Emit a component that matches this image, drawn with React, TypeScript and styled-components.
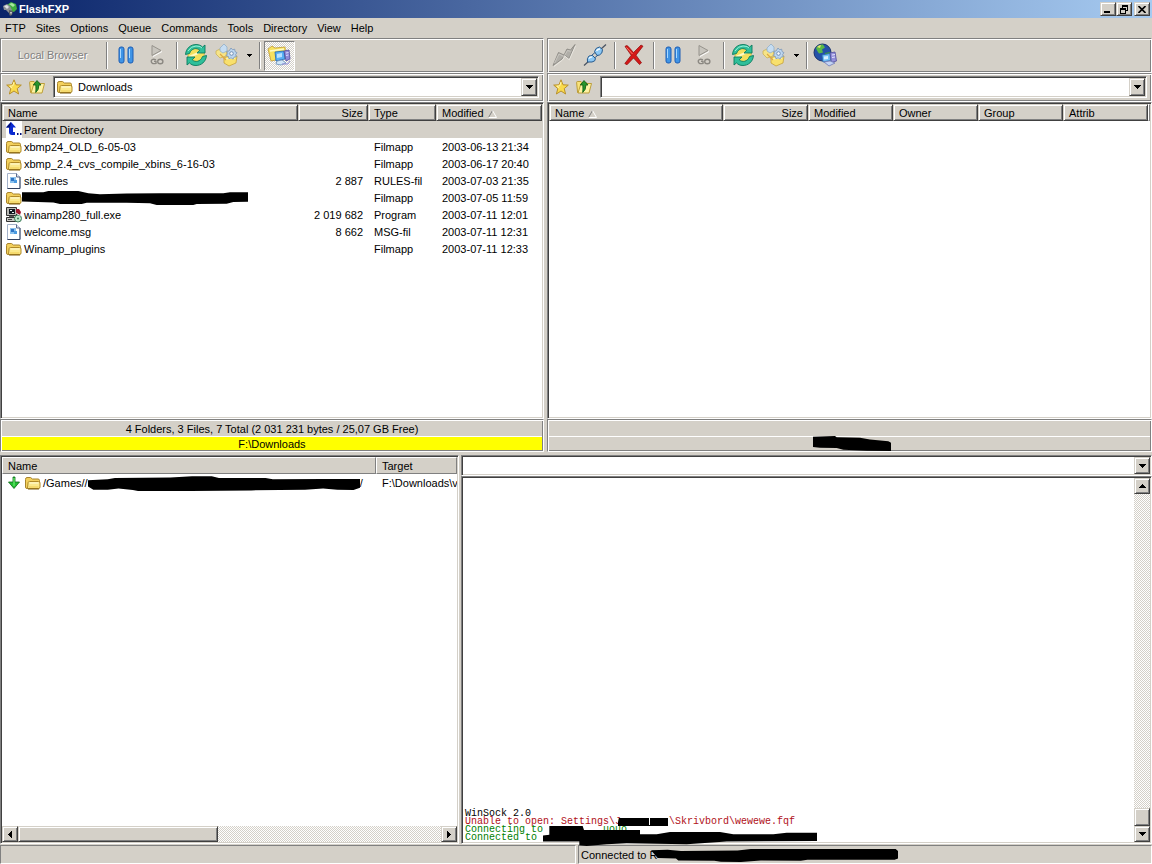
import React from "react";
import styled, { createGlobalStyle, css } from "styled-components";

const face = "#d4d0c8";
const shade = "#808080";
const dark = "#404040";
const uiFont = '"Liberation Sans", Arial, sans-serif';

const GlobalStyle = createGlobalStyle`
  * { box-sizing: border-box; }
  html, body { margin: 0; padding: 0; }
  body { background: ${face}; color: #000; font: 11px/13px ${uiFont}; }
  button, input, select { font: inherit; color: inherit; margin: 0; border-radius: 0; }
  svg { display: block; flex: none; }
`;

const sunken = css`
  border: 1px solid;
  border-color: ${shade} #fff #fff ${shade};
  box-shadow: inset 1px 1px ${dark}, inset -1px -1px ${face};
  padding: 1px;
`;

const raised = css`
  border: 1px solid;
  border-color: ${face} ${dark} ${dark} ${face};
  box-shadow: inset 1px 1px #fff, inset -1px -1px ${shade};
  background: ${face};
`;

const etched = css`
  border: 1px solid;
  border-color: ${shade} #fff #fff ${shade};
  box-shadow: inset 1px 1px #fff, inset -1px -1px ${shade};
`;

const checker = css`
  background: repeating-conic-gradient(#fff 0 25%, ${face} 0 50%) 0 0 / 2px 2px;
`;

const Window = styled.div`
  display: flex;
  flex-direction: column;
  min-height: 100vh;
`;

const TitleBar = styled.header`
  display: flex;
  align-items: center;
  height: 18px;
  padding: 0 2px 0 3px;
  background: linear-gradient(90deg, #0a246a, #a6caf0);
`;

const Title = styled.h1`
  flex: 1;
  margin: 0 0 0 2px;
  color: #fff;
  font-size: 11px;
  font-weight: bold;
`;

const CaptionButton = styled.button<{ $apart?: boolean }>`
  ${raised}
  display: flex;
  align-items: center;
  justify-content: center;
  width: 16px;
  height: 14px;
  padding: 0;
  margin-left: ${(p) => (p.$apart ? 2 : 0)}px;
`;

const MenuBar = styled.nav`
  display: flex;
  height: 20px;
`;

const MenuItem = styled.button`
  border: 0;
  padding: 0 5px;
  background: none;
`;

const TopPanes = styled.div`
  flex: 414 0 0;
  display: grid;
  grid-template-columns: minmax(0, 544fr) minmax(0, 605fr);
  column-gap: 3px;
  margin-bottom: 3px;
`;

const BottomPanes = styled.div`
  flex: 389 0 0;
  display: grid;
  grid-template-columns: minmax(0, 459fr) minmax(0, 691fr);
  column-gap: 2px;
  margin-bottom: 1px;
`;

const Pane = styled.section`
  display: flex;
  flex-direction: column;
`;

const Toolbar = styled.div`
  ${etched}
  display: flex;
  align-items: center;
  height: 35px;
  padding: 0 1px;
`;

const ToolLabel = styled.span`
  width: 101px;
  text-align: center;
  color: ${shade};
  text-shadow: 1px 1px #fff;
`;

const Tool = styled.button<{ $pressed?: boolean }>`
  display: flex;
  align-items: center;
  justify-content: center;
  width: 31px;
  height: 30px;
  padding: 0 2px 2px 0;
  border: 1px solid transparent;
  background: none;
  ${(p) =>
    p.$pressed &&
    css`
      ${checker}
      border-color: ${shade} #fff #fff ${shade};
    `}
`;

const ToolArrow = styled(Tool)`
  width: 13px;
  padding: 0;
`;

const Divider = styled.i`
  width: 2px;
  height: 27px;
  margin: 0 3px;
  border-left: 1px solid ${shade};
  border-right: 1px solid #fff;
`;

const AddressBar = styled.div`
  ${etched}
  display: flex;
  align-items: center;
  height: 29px;
  padding: 0 4px 1px 5px;
`;

const IconButton = styled.button`
  width: 16px;
  height: 16px;
  margin-right: 7px;
  padding: 0;
  border: 0;
  background: none;
`;

const Combo = styled.div<{ $height: number }>`
  ${sunken}
  position: relative;
  flex: 1 0 auto;
  display: flex;
  height: ${(p) => p.$height}px;
  background: #fff;
`;

const AddressCombo = styled(Combo)`
  margin-left: 1px;
`;

const QueryCombo = styled(Combo)`
  flex: none;
`;

const ComboIcon = styled.span`
  position: absolute;
  left: 3px;
  top: 2px;
  pointer-events: none;
`;

const Select = styled.select`
  appearance: none;
  flex: 1;
  width: 100%;
  border: 0;
  padding: 0 18px 0 23px;
  background: transparent;
  outline: 0;
`;

const ComboArrow = styled.span`
  ${raised}
  position: absolute;
  top: 1px;
  right: 1px;
  bottom: 1px;
  width: 16px;
  display: flex;
  align-items: center;
  justify-content: center;
  pointer-events: none;
`;

const ListBox = styled.div`
  ${sunken}
  flex: 1;
  display: flex;
  flex-direction: column;
  overflow: hidden;
  background: #fff;
`;

const ListBody = styled.div`
  flex: 1;
  overflow: hidden;
`;

const Table = styled.table`
  width: 100%;
  table-layout: fixed;
  border-collapse: separate;
  border-spacing: 0;
`;

const HeadCell = styled.th<{ $right?: boolean; $flat?: boolean; $width?: number }>`
  ${raised}
  ${(p) =>
    p.$flat &&
    css`
      border-color: #fff ${shade} ${shade} #fff;
      box-shadow: none;
    `}
  width: ${(p) => (p.$width ? `${p.$width}px` : "auto")};
  height: 17px;
  padding: 2px 4px 0 5px;
  font-weight: normal;
  line-height: 13px;
  text-align: ${(p) => (p.$right ? "right" : "left")};
  white-space: nowrap;
  overflow: hidden;
`;

const FillerCell = styled(HeadCell)`
  padding: 0;
`;

const HeadLabel = styled.span`
  display: flex;
  align-items: center;
  gap: 4px;
`;

const Row = styled.tr<{ $selected?: boolean }>`
  background: ${(p) => (p.$selected ? face : "#fff")};
`;

const Cell = styled.td<{ $right?: boolean }>`
  height: 17px;
  padding: 2px 5px 0 6px;
  line-height: 15px;
  text-align: ${(p) => (p.$right ? "right" : "left")};
  white-space: nowrap;
  overflow: hidden;
`;

const NameCell = styled(Cell)`
  padding: 0 0 0 4px;
`;

const Entry = styled.span`
  display: flex;
  align-items: center;
  gap: 2px;
  height: 17px;
`;

const EntryName = styled.span`
  display: flex;
  align-items: center;
  height: 17px;
  padding-top: 2px;
`;

const QueueIcons = styled.span`
  display: flex;
  gap: 3px;
`;

const Summary = styled.footer`
  ${etched}
  height: 33px;
  padding: 1px;
  text-align: center;
`;

const Totals = styled.div`
  height: 15px;
  line-height: 16px;
`;

const PathLine = styled.div<{ $color?: string }>`
  display: flex;
  justify-content: center;
  height: 14px;
  line-height: 14px;
  border-top: 1px solid #fff;
  background: ${(p) => p.$color || "transparent"};
`;

const ScrollBar = styled.div<{ $vertical?: boolean }>`
  ${checker}
  display: flex;
  flex: none;
  flex-direction: ${(p) => (p.$vertical ? "column" : "row")};
  ${(p) => (p.$vertical ? "width: 16px;" : "height: 16px;")}
`;

const ScrollButton = styled.button`
  ${raised}
  display: flex;
  align-items: center;
  justify-content: center;
  width: 16px;
  height: 16px;
  padding: 0;
`;

const Thumb = styled.div<{ $grow: number }>`
  ${raised}
  flex: ${(p) => p.$grow} 0 0;
`;

const Track = styled.div<{ $grow: number }>`
  flex: ${(p) => p.$grow} 0 0;
`;

const QueryInput = styled.input`
  flex: 1;
  border: 0;
  padding: 0 20px 0 3px;
  background: transparent;
  outline: 0;
`;

const LogBox = styled.div`
  ${sunken}
  flex: 1;
  display: flex;
  background: #fff;
`;

const LogLines = styled.div`
  position: relative;
  flex: 1;
  display: flex;
  flex-direction: column;
  justify-content: flex-end;
  padding-left: 2px;
  font: 10px/8px "Liberation Mono", "Courier New", monospace;
`;

const LogLine = styled.div<{ $color?: string }>`
  height: 8px;
  white-space: pre;
  color: ${(p) => p.$color || "#000"};
`;

const LogMark = styled.span<{ $left: number; $bottom: number }>`
  position: absolute;
  left: ${(p) => p.$left}px;
  bottom: ${(p) => p.$bottom}px;
  z-index: 1;
`;

const StatusBar = styled.footer`
  display: grid;
  grid-template-columns: minmax(0, 576fr) minmax(0, 574fr);
  column-gap: 2px;
  height: 19px;
`;

const StatusCell = styled.div`
  display: flex;
  align-items: center;
  padding: 1px 2px 0;
  white-space: pre;
  border: 1px solid;
  border-color: ${shade} #fff #fff ${shade};
`;

/* ---------- drawings ---------- */

const Triangle = ({ dir }: { dir: "up" | "down" | "left" | "right" }) => {
  const d = {
    down: "M0 0h7v1h-1v1h-1v1h-1v1h-1v-1h-1v-1h-1v-1h-1z",
    up: "M0 4h7v-1h-1v-1h-1v-1h-1v-1h-1v1h-1v1h-1v1h-1z",
    left: "M4 0v7h-1v-1h-1v-1h-1v-1h-1v-1h1v-1h1v-1h1v-1z",
    right: "M0 0v7h1v-1h1v-1h1v-1h1v-1h-1v-1h-1v-1h-1v-1z",
  }[dir];
  const tall = dir === "left" || dir === "right";
  return (
    <svg width={tall ? 4 : 7} height={tall ? 7 : 4} shapeRendering="crispEdges">
      <path d={d} />
    </svg>
  );
};

const SortMark = () => (
  <svg width="9" height="8">
    <path d="M4.5 .5L.5 7.5" stroke="#808080" fill="none" />
    <path d="M4.5 .5L8.5 7.5H.5" stroke="#fff" fill="none" />
  </svg>
);

const AppIcon = () => (
  <svg width="14" height="16" viewBox="0 0 14 16">
    <path d="M4 4l4-3 5 2 1 5-3 3-5-1z" fill="#3fae3f" />
    <path d="M6 3l3-1 3 2-2 2z" fill="#a8e8a0" />
    <path d="M0 5l4-2 3 2 2 4-3 3-3-3H1z" fill="#8c9094" />
    <path d="M1 5l3-1 2 2-2 2z" fill="#dfe2e4" />
    <path d="M6 9l4 1-1 4-2 1-1-2z" fill="#5a5f62" />
    <path d="M7 11l2 0-1 3z" fill="#cfd2d4" />
  </svg>
);

const Folder = () => (
  <svg width="16" height="16" viewBox="0 0 16 16">
    <path d="M.5 4.500q0-2 1.500-2h3.500l2 1.500h5.500q1.500 0 1.500 1.500v6.500q0 1.500-1.500 1.500h-11q-1.500 0-1.500-1.500z" fill="#f3d05c" stroke="#a8842c" />
    <path d="M2.500 13l.6-5.500q.2-1 1.400-1h9q1.500 0 1.500 1.500v4q0 1.500-1.500 1.500h-10z" fill="#fbe98c" stroke="#b08a28" />
    <path d="M4.500 8h9" stroke="#fffbdc" />
    <path d="M4 12h9.500" stroke="#f0cc50" />
    <path d="M3 14h11" stroke="#7c5c10" />
  </svg>
);

const ParentIcon = () => (
  <svg width="16" height="17" viewBox="0 0 16 17">
    <path d="M0 0h16v17H0z" fill="#fff" />
    <path d="M5 1L0 6.500h3V11q0 3 3 3h3v-3H7V6.500h3z" fill="#0a2ad0" />
    <path d="M5 1L0 6.500h3V8l2-5z" fill="#02107a" />
    <path d="M11 12h1.500v2H11zM14 12h1.500v2H14z" fill="#02107a" />
  </svg>
);

const FileIcon = () => (
  <svg width="16" height="16" viewBox="0 0 16 16">
    <path d="M1.500.5h9l3.500 3.500v11.500H1.500z" fill="#fff" stroke="#a4b2ca" />
    <path d="M14 4v11.500H1.500" fill="none" stroke="#33415f" />
    <path d="M10.500.5v3.500H14" fill="#dbe3f2" stroke="#5b6b8c" />
    <path d="M4 4h6v6H4z" fill="#8cc2ee" />
    <path d="M5 5h3v3H5z" fill="#2f74c4" />
    <path d="M8 7h3v3H8z" fill="#4b9be0" />
  </svg>
);

const ProgramIcon = () => (
  <svg width="16" height="16" viewBox="0 0 16 16">
    <path d="M.5.5h10v8H.5z" fill="#b8b8b4" stroke="#333" />
    <path d="M3 2h6v5H3z" fill="#101820" />
    <path d="M4 3h2v1H4zM6 5h2v1H6z" fill="#e8f4f4" />
    <path d="M3 9h5v1H3z" fill="#555" />
    <path d="M.5 10.500h10v4H.5z" fill="#c8c8c4" stroke="#333" />
    <path d="M2 12h4v1H2z" fill="#444" />
    <path d="M10 2l3 0 2 3-1 3-4-1z" fill="#a01830" />
    <circle cx="12" cy="11.500" r="3.500" fill="#bfe8cc" stroke="#3b7a58" />
    <circle cx="12" cy="11.500" r="1" fill="#3b7a58" />
    <path d="M10 6l5 3" stroke="#ddd" />
  </svg>
);

const DownArrow = () => (
  <svg width="16" height="16" viewBox="0 0 16 16">
    <path d="M7 2h2v5h4.500L8 13.500 2.500 7H7z" fill="#22c032" stroke="#0b6a16" strokeWidth=".8" />
    <path d="M8 3v8" stroke="#7cf07c" />
  </svg>
);

const Star = () => (
  <svg width="16" height="16" viewBox="0 0 16 16">
    <path d="M8 .8l2 5 5.300.3-4.100 3.500 1.400 5.400L8 12l-4.600 3 1.400-5.400L.7 6.100 6 5.800z" fill="#fadb4c" stroke="#b8902c" strokeLinejoin="round" />
    <path d="M8 3l-1.200 3.800-3 .4 2.400 2" fill="none" stroke="#fff6b0" />
  </svg>
);

const UpFolder = () => (
  <svg width="16" height="16" viewBox="0 0 16 16">
    <path d="M.6 3.500q0-1 1-1H5l1.500 1.500h4.500v9.500H1.600z" fill="#f7e27a" stroke="#b8962c" strokeWidth=".9" />
    <path d="M2 14L5 4.500h10.500L13 14z" fill="#fdf3a4" stroke="#b8962c" strokeWidth=".9" />
    <path d="M8 1.500l4 4.500H9.900q.2 5-3.200 7.500 .4-3 .1-7.500H4.300z" fill="#27952c" stroke="#0d5a14" strokeWidth=".8" />
  </svg>
);

const PauseIcon = () => (
  <svg width="18" height="18" viewBox="0 0 18 18">
    <rect x="2" y="1" width="5" height="16" rx="2" fill="#3f94e6" stroke="#1d5db4" />
    <rect x="11" y="1" width="5" height="16" rx="2" fill="#3f94e6" stroke="#1d5db4" />
    <path d="M3.500 3v9M12.500 3v9" stroke="#a8d8ff" />
  </svg>
);

const GoIcon = () => (
  <svg width="18" height="22" viewBox="0 0 18 22">
    <path d="M4 1.500v10l9-5z" fill="#c8c5be" stroke="#96938c" />
    <path d="M5 12.500l9-5" stroke="#fff" />
    <g fill="none" stroke="#8b8882" strokeWidth="1.400">
      <path d="M8 15.800q-4-1.500-4.800 1.200 0 3.500 4.800 2.400v-2H6" />
      <ellipse cx="12.300" cy="17.500" rx="2.600" ry="2.200" />
    </g>
  </svg>
);

const RefreshIcon = () => (
  <svg width="24" height="24" viewBox="0 0 24 24">
    <path d="M4 8l6-3 11 3-2 9-7 3-8-4z" fill="#f4e05c" stroke="#c8a838" strokeWidth=".6" />
    <path d="M5 14l14-6" stroke="#fffac0" strokeWidth="2" />
    <path d="M1.500 11.500C2 5 7 1.500 12 1.500c3 0 5 1 6.500 2.600L21 2v8h-8l2.700-2.800C13 4.500 7.500 5 5.500 10.500z" fill="#2fbf9a" stroke="#0b7a5e" strokeWidth=".9" />
    <path d="M22.500 12.500C22 19 17 22.500 12 22.500c-3 0-5-1-6.500-2.600L3 22v-8h8l-2.700 2.800c2.700 2.700 8.200 2.200 10.200-3.300z" fill="#2fbf9a" stroke="#0b7a5e" strokeWidth=".9" />
    <path d="M4 8q3-5 8-5t6 2" fill="none" stroke="#9cf0d8" />
  </svg>
);

const TransferIcon = () => (
  <svg width="24" height="24" viewBox="0 0 24 24">
    <path d="M1 8l4-2 2 1 5 0-1 6-6 2-4-4z" fill="#f6e488" stroke="#c9ac4a" strokeWidth=".7" />
    <path d="M9 15l4-2 2 1 7-1-1 7-7 3-5-3z" fill="#f8e06c" stroke="#c09a30" strokeWidth=".7" />
    <path d="M11 16l9-1" stroke="#fffbd0" />
    <path d="M5 5l4-4 3 3 0 4-4 2-3-2z" fill="#c6ddf2" stroke="#93aec8" strokeWidth=".8" />
    <path d="M16 5l1.500 1.700 2.200-.5.300 2.300 2 1.200-1.400 1.800.8 2.200-2.300.4-1 2-2-1.200-2.200.8-.5-2.200-2-1 1.300-1.900-.9-2.100 2.200-.5z" fill="#bcd6f0" stroke="#7b97b8" strokeWidth=".8" />
    <circle cx="16.500" cy="10.500" r="1.800" fill="#f5f8fc" stroke="#5f7fa6" strokeWidth=".8" />
    <path d="M5 11l6 6" stroke="#e0a840" strokeWidth="1.300" />
  </svg>
);

const BrowserIcon = () => (
  <svg width="24" height="24" viewBox="0 0 24 24">
    <path d="M1 6l4-3 3 2 10-1 1 11-15 3z" fill="#f7e15e" stroke="#c09a30" strokeWidth=".8" />
    <path d="M3 8l14-2" stroke="#fffbc0" strokeWidth="1.500" />
    <path d="M8 9l9-1 1 8-9 2z" fill="#58b0f4" stroke="#1c66b8" strokeWidth=".8" />
    <path d="M10 11l5-1 0 4-5 1z" fill="#b8e2ff" />
    <path d="M17 8l5-1 1 9-4 2z" fill="#8f8ad8" stroke="#4d4a9c" strokeWidth=".8" />
    <path d="M19 10l2.500-.5M19 12.500l2.500-.5" stroke="#dcdcff" />
    <path d="M10 18l5-1 4 3-5 2-5-1z" fill="#cfe6f8" stroke="#6a8db8" strokeWidth=".8" />
    <path d="M15 21h6l2-3" fill="none" stroke="#8f8ad8" />
  </svg>
);

const BoltIcon = () => (
  <svg width="24" height="24" viewBox="0 0 24 24">
    <path d="M1 22.500L6.500 9.500 12 12l3-6 3.500 1L23 1.500 17 15.500l-4.500-3.500L10 16z" fill="#b0aea8" stroke="#8b8983" strokeWidth=".9" />
    <path d="M2 23.500l8.500-6.500L13 13.200l4.300 3.500L23.500 3" fill="none" stroke="#f4f2ec" strokeWidth=".7" />
    <path d="M2.500 20l4.500-9 5 2.500 3.500-6 3 .8" fill="none" stroke="#d0cec8" strokeWidth=".8" />
  </svg>
);

const PlugIcon = () => (
  <svg width="24" height="24" viewBox="0 0 24 24">
    <path d="M1 22.500l5-4.500M18 6l5-4.500" stroke="#4c5664" strokeWidth="1.300" />
    <path d="M4.500 19q-1-3.500 1.500-6l3.500-.5 3 3q0 3-3.500 3.500z" fill="#8cc8f4" stroke="#27598c" />
    <path d="M11.500 8.500q1-4 5-4.500l3 2.500q.2 4-3 5.500l-2.500.5z" fill="#8cc8f4" stroke="#27598c" />
    <path d="M8.500 12.500l3.500-3M11.500 15l3.500-3" stroke="#27598c" />
    <path d="M6 15.500q1-1.800 3-1.500M13.500 8q1-2 3.500-2" stroke="#f0faff" fill="none" strokeWidth="1.500" />
  </svg>
);

const CrossIcon = () => (
  <svg width="22" height="22" viewBox="0 0 22 22">
    <path d="M2 2.500Q3.500.8 5 2.200L10.500 8.500 18 1l2 1.200L13 11.200l5.500 7.600-2 1.700-6-6.500L4 20.800 1.800 19.500 8.200 11.300z" fill="#d41818" stroke="#8e0c0c" strokeWidth=".7" />
    <path d="M3.500 3.500l6 6.500" stroke="#ff7a6a" />
  </svg>
);

const GlobeIcon = () => (
  <svg width="26" height="24" viewBox="0 0 26 24">
    <circle cx="9.500" cy="9.500" r="8.500" fill="#2451a8" stroke="#16306c" />
    <path d="M3 5q3-4 7-3.500l2 3-3 2 1 3-4 1-2-3z" fill="#58b848" />
    <path d="M4 4q2-2 4-2l-1 3z" fill="#e4e86a" />
    <path d="M12 10l5-1-1 5-3 3z" fill="#3c9c3c" />
    <path d="M9 12l8-1.500.5 7L10 19z" fill="#74c0f4" stroke="#2a69b0" strokeWidth=".8" />
    <path d="M11 13.500l4-.5v3l-4 .5z" fill="#d8f0ff" />
    <path d="M17 10l5-1 1.500 9-5 1.500z" fill="#948fda" stroke="#514e9c" strokeWidth=".8" />
    <path d="M19 12l3-.5M19 14.500l3-.5" stroke="#e4e4ff" />
    <path d="M11 19l6-1 5 2-6 3z" fill="#c4d4f4" stroke="#6f78b8" strokeWidth=".8" />
  </svg>
);

/* Marker strokes that hide private names */
const Marker = ({ w, h, box, points }: { w: number; h: number; box: string; points: string }) => (
  <svg width={w} height={h} viewBox={box} preserveAspectRatio="none" aria-hidden="true">
    <polygon points={points} />
  </svg>
);

const FileMark = styled.span`
  margin-left: -2px;
`;

const PathMark = styled.span`
  margin: -1px 0 0 5px;
`;

const StatusMark = styled.span`
  margin-left: -6px;
`;

/* ---------- data ---------- */

const menus = ["FTP", "Sites", "Options", "Queue", "Commands", "Tools", "Directory", "View", "Help"];

type FileRow = { icon: React.ReactNode; name?: string; size?: string; type: string; modified: string };

const files: FileRow[] = [
  { icon: <Folder />, name: "xbmp24_OLD_6-05-03", type: "Filmapp", modified: "2003-06-13 21:34" },
  { icon: <Folder />, name: "xbmp_2.4_cvs_compile_xbins_6-16-03", type: "Filmapp", modified: "2003-06-17 20:40" },
  { icon: <FileIcon />, name: "site.rules", size: "2 887", type: "RULES-fil", modified: "2003-07-03 21:35" },
  { icon: <Folder />, type: "Filmapp", modified: "2003-07-05 11:59" },
  { icon: <ProgramIcon />, name: "winamp280_full.exe", size: "2 019 682", type: "Program", modified: "2003-07-11 12:01" },
  { icon: <FileIcon />, name: "welcome.msg", size: "8 662", type: "MSG-fil", modified: "2003-07-11 12:31" },
  { icon: <Folder />, name: "Winamp_plugins", type: "Filmapp", modified: "2003-07-11 12:33" },
];

const Address = ({ label, path }: { label: string; path?: string }) => (
  <AddressBar>
    <IconButton aria-label="Favorites"><Star /></IconButton>
    <IconButton aria-label="Parent directory"><UpFolder /></IconButton>
    <AddressCombo $height={22}>
      {path && <ComboIcon><Folder /></ComboIcon>}
      <Select aria-label={label}>
        <option>{path || ""}</option>
      </Select>
      <ComboArrow><Triangle dir="down" /></ComboArrow>
    </AddressCombo>
  </AddressBar>
);

const TransferTools = () => (
  <>
    <Tool aria-label="Pause"><PauseIcon /></Tool>
    <Tool aria-label="Go" disabled><GoIcon /></Tool>
    <Divider />
    <Tool aria-label="Refresh"><RefreshIcon /></Tool>
    <Tool aria-label="Transfer"><TransferIcon /></Tool>
    <ToolArrow aria-label="Transfer options">
      <svg width="5" height="3" shapeRendering="crispEdges"><path d="M0 0h5v1h-1v1h-1v1h-1v-1h-1v-1h-1z" /></svg>
    </ToolArrow>
    <Divider />
  </>
);

export default function App() {
  return (
    <Window>
      <GlobalStyle />
      <TitleBar>
        <AppIcon />
        <Title>FlashFXP</Title>
        <CaptionButton aria-label="Minimize">
          <svg width="8" height="8" shapeRendering="crispEdges"><path d="M0 6h6v2H0z" /></svg>
        </CaptionButton>
        <CaptionButton aria-label="Restore">
          <svg width="9" height="9" shapeRendering="crispEdges">
            <path d="M2 0h6v6H6V5h1V2H3v1H2zM0 3h6v6H0zM1 5v3h4V5z" fillRule="evenodd" />
          </svg>
        </CaptionButton>
        <CaptionButton $apart aria-label="Close">
          <svg width="8" height="7" viewBox="0 0 8 7"><path d="M.5 0l7 7M7.500 0l-7 7" stroke="#000" strokeWidth="1.600" /></svg>
        </CaptionButton>
      </TitleBar>
      <MenuBar>
        {menus.map((m) => <MenuItem key={m}>{m}</MenuItem>)}
      </MenuBar>

      <TopPanes>
        <Pane>
          <Toolbar>
            <ToolLabel>Local Browser</ToolLabel>
            <Divider />
            <TransferTools />
            <Tool $pressed aria-label="Switch browser"><BrowserIcon /></Tool>
          </Toolbar>
          <Address label="Local folder" path="Downloads" />
          <ListBox>
            <Table>
              <thead>
                <tr>
                  <HeadCell $width={296}>Name</HeadCell>
                  <HeadCell $width={70} $right>Size</HeadCell>
                  <HeadCell $width={68}>Type</HeadCell>
                  <HeadCell><HeadLabel>Modified <SortMark /></HeadLabel></HeadCell>
                </tr>
              </thead>
              <tbody>
                <Row $selected>
                  <NameCell colSpan={4}><Entry><ParentIcon /><EntryName>Parent Directory</EntryName></Entry></NameCell>
                </Row>
                {files.map((f) => (
                  <Row key={f.modified}>
                    <NameCell>
                      <Entry>
                        {f.icon}
                        {f.name ? (
                          <EntryName>{f.name}</EntryName>
                        ) : (
                          <FileMark>
                            <Marker w={226} h={14} box="66 272 678 43" points="66,276 130,276 145,272 235,272 265,279 300,282 380,280 480,279 670,279 690,276 744,276 744,305 700,306 680,311 590,312 580,315 470,315 450,310 380,308 260,308 245,312 180,312 160,307 66,304" />
                          </FileMark>
                        )}
                      </Entry>
                    </NameCell>
                    <Cell $right>{f.size}</Cell>
                    <Cell>{f.type}</Cell>
                    <Cell>{f.modified}</Cell>
                  </Row>
                ))}
              </tbody>
            </Table>
          </ListBox>
          <Summary>
            <Totals>4 Folders, 3 Files, 7 Total (2 031 231 bytes / 25,07 GB Free)</Totals>
            <PathLine $color="#ffff00">F:\Downloads</PathLine>
          </Summary>
        </Pane>

        <Pane>
          <Toolbar>
            <Tool aria-label="Connect" disabled><BoltIcon /></Tool>
            <Tool aria-label="Disconnect"><PlugIcon /></Tool>
            <Divider />
            <Tool aria-label="Abort"><CrossIcon /></Tool>
            <Divider />
            <TransferTools />
            <Tool aria-label="Remote browser"><GlobeIcon /></Tool>
          </Toolbar>
          <Address label="Remote folder" />
          <ListBox>
            <Table>
              <thead>
                <tr>
                  <HeadCell $width={174}><HeadLabel>Name <SortMark /></HeadLabel></HeadCell>
                  <HeadCell $width={85} $right>Size</HeadCell>
                  <HeadCell $width={85}>Modified</HeadCell>
                  <HeadCell $width={85}>Owner</HeadCell>
                  <HeadCell $width={85}>Group</HeadCell>
                  <HeadCell $width={85}>Attrib</HeadCell>
                  <FillerCell as="td" $flat />
                </tr>
              </thead>
            </Table>
          </ListBox>
          <Summary>
            <Totals />
            <PathLine>
              <PathMark>
                <Marker w={78} h={15} box="819 77 234 46" points="819,79 885,77 890,81 960,82 990,88 1045,93 1053,98 1053,123 980,122 910,119 890,114 840,113 819,111" />
              </PathMark>
            </PathLine>
          </Summary>
        </Pane>
      </TopPanes>

      <BottomPanes>
        <Pane>
          <ListBox>
            <ListBody>
              <Table>
                <thead>
                  <tr>
                    <HeadCell $flat $width={374}>Name</HeadCell>
                    <HeadCell $flat>Target</HeadCell>
                  </tr>
                </thead>
                <tbody>
                  <Row>
                    <NameCell>
                      <Entry>
                        <QueueIcons><DownArrow /><Folder /></QueueIcons>
                        <EntryName>
                          /Games//
                          <Marker w={272} h={16} box="245 195 758 50" points="245,208 300,205 320,201 475,200 535,196 590,196 610,201 740,201 760,205 900,204 1003,204 1003,232 985,239 940,238 900,234 850,238 700,240 520,242 500,245 400,245 370,239 330,234 300,238 260,238 245,228" />
                          /
                        </EntryName>
                      </Entry>
                    </NameCell>
                    <Cell>F:\Downloads\v</Cell>
                  </Row>
                </tbody>
              </Table>
            </ListBody>
            <ScrollBar>
              <ScrollButton aria-label="Scroll left"><Triangle dir="left" /></ScrollButton>
              <Thumb $grow={199} />
              <Track $grow={224} />
              <ScrollButton aria-label="Scroll right"><Triangle dir="right" /></ScrollButton>
            </ScrollBar>
          </ListBox>
        </Pane>

        <Pane>
          <QueryCombo $height={21}>
            <QueryInput aria-label="Command" />
            <ComboArrow><Triangle dir="down" /></ComboArrow>
          </QueryCombo>
          <LogBox>
            <LogLines>
              <LogLine>WinSock 2.0</LogLine>
              <LogLine $color="#b01018">{"Unable to open: Settings\\J        \\Skrivbord\\wewewe.fqf"}</LogLine>
              <LogLine $color="#008000">{"Connecting to          uouo"}</LogLine>
              <LogLine $color="#008000">Connected to</LogLine>
              <LogMark $left={155} $bottom={16}>
                <Marker w={50} h={8} box="0 0 50 8" points="1,0 31,0 31,7 32,7 32,0 50,0 50,8 0,8 0,4" />
              </LogMark>
              <LogMark $left={80} $bottom={-4}>
                <Marker w={274} h={20} box="309 79 822 59" points="328,79 428,79 432,91 600,91 600,103 650,103 690,97 840,97 880,103 1000,103 1040,99 1131,99 1131,123 860,125 740,133 560,130 500,133 440,138 418,136 418,125 309,125 309,107 328,105" />
              </LogMark>
            </LogLines>
            <ScrollBar $vertical>
              <ScrollButton aria-label="Scroll up"><Triangle dir="up" /></ScrollButton>
              <Track $grow={316} />
              <Thumb $grow={16} />
              <ScrollButton aria-label="Scroll down"><Triangle dir="down" /></ScrollButton>
            </ScrollBar>
          </LogBox>
        </Pane>
      </BottomPanes>

      <StatusBar>
        <StatusCell />
        <StatusCell>
          {"Connected to R"}
          <StatusMark>
            <Marker w={247} h={13} box="630 148 742 41" points="630,152 680,150 720,154 890,153 930,148 1150,148 1365,148 1372,154 1372,178 1362,182 1100,182 1080,185 960,184 900,189 840,188 820,185 712,184 705,178 650,176" />
          </StatusMark>
        </StatusCell>
      </StatusBar>
    </Window>
  );
}
